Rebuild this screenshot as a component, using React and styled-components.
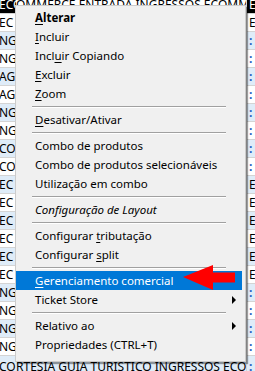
import React from 'react';
import styled, { createGlobalStyle } from 'styled-components';

const GlobalStyle = createGlobalStyle`
  html, body {
    margin: 0;
    padding: 0;
    background: #ffffff;
    overflow: hidden;
  }
  body {
    font-family: 'Segoe UI', 'Noto Sans', 'Open Sans', sans-serif;
  }
`;

const Screen = styled('div')`
  position: relative;
  width: 255px;
  height: 371px;
  overflow: hidden;
  background: #ffffff;
`;

const Grid = styled('div')`
  display: flex;
  flex-direction: column;
  margin-top: -4px;
  font-size: 12px;
  color: #000000;
`;

// the last row sits lower: its text only shows below the menu shadow
const Row = styled('div')`
  display: flex;
  height: 18px;
  box-sizing: border-box;
  border-bottom: 1px solid #d4d4d4;
  line-height: ${(props) => (props.$low ? '22px' : '17px')};
  background: ${(props) => (props.$alt ? '#dfecf8' : '#ffffff')};
`;

const CodeCell = styled('div')`
  width: 16px;
  flex-shrink: 0;
  overflow: hidden;
  white-space: nowrap;
  text-indent: -1px;
  background: ${(props) => (props.$focus ? '#000000' : 'transparent')};
  color: ${(props) => (props.$focus ? '#ffffff' : '#000000')};
`;

const DescCell = styled('div')`
  width: 230px;
  flex-shrink: 0;
  overflow: hidden;
  white-space: nowrap;
  border-right: 1px solid #d4d4d4;
`;

const FlagCell = styled('div')`
  flex: 1;
  overflow: hidden;
  white-space: nowrap;
  padding-left: 2px;
  background: ${(props) => (props.$focus ? '#000000' : 'transparent')};
  color: ${(props) => (props.$focus ? '#ffffff' : props.$dot ? '#1f5fc4' : '#000000')};
  font-weight: ${(props) => (props.$dot ? 'bold' : 'normal')};
`;

const Menu = styled('div')`
  position: absolute;
  left: 15px;
  top: 5px;
  width: 231px;
  box-sizing: border-box;
  padding: 2px 0 7px;
  background: #f0f0f0;
  border: 1px solid #cccccc;
  box-shadow: 2px 2px 1px rgba(0, 0, 0, 0.38);
  font-size: 11.5px;
  color: #000000;
`;

const Item = styled('div')`
  position: relative;
  display: flex;
  align-items: center;
  height: 19px;
  margin-right: 3px;
  padding-left: 19px;
  white-space: nowrap;
  background: ${(props) => (props.$active ? '#0078d7' : 'transparent')};
  color: ${(props) => (props.$active ? '#ffffff' : '#000000')};
  font-weight: ${(props) => (props.$bold ? 'bold' : 'normal')};
  font-style: ${(props) => (props.$italic ? 'italic' : 'normal')};

  u {
    text-decoration-thickness: 1px;
    text-underline-offset: 2px;
  }
`;

const Label = styled('span')`
  white-space: pre;
`;

const SubArrow = styled('span')`
  margin-left: auto;
  margin-right: 6px;
  width: 0;
  height: 0;
  border-left: 4px solid #000000;
  border-top: 4px solid transparent;
  border-bottom: 4px solid transparent;
`;

const Separator = styled('div')`
  height: 7px;
  display: flex;
  align-items: center;

  &::after {
    content: '';
    flex: 1;
    margin: 0 19px 0 16px;
    border-top: 1px solid #a0a0a0;
    border-bottom: 1px solid #ffffff;
  }
`;

const Pointer = styled('svg')`
  position: absolute;
  left: 182px;
  top: 264px;
`;

const rows = [
  { code: 'ECOMMERCE', desc: 'OMMERCE ENTRADA INGRESSOS ECOMMERCE', flag: 'E', focus: true },
  { code: 'EC', flag: 'EI' },
  { code: 'NG', flag: ':' },
  { code: 'NG', flag: ':' },
  { code: 'AGI', flag: ':' },
  { code: 'AGI', flag: ':' },
  { code: 'NG', flag: ':' },
  { code: 'NG', flag: ':' },
  { code: 'CO', flag: ':' },
  { code: 'CO', flag: ':' },
  { code: 'EC', flag: 'EI' },
  { code: 'EC', flag: 'EI' },
  { code: 'EC', flag: 'EI' },
  { code: 'EC', flag: 'EI' },
  { code: 'EC', flag: 'EI' },
  { code: 'EC', flag: 'EI' },
  { code: 'NG', flag: ':' },
  { code: 'NG', flag: ':' },
  { code: 'NG', flag: ':' },
  { code: 'NG', flag: ':' },
  { code: 'CO', desc: 'RTESIA GUIA TURISTICO INGRESSOS ECOMMERCE', flag: ':', low: true },
];

const menu = [
  { label: <><u>A</u>lterar</>, bold: true },
  { label: <><u>I</u>ncluir</> },
  { label: <>Incl<u>u</u>ir Copiando</> },
  { label: <><u>E</u>xcluir</> },
  { label: <><u>Z</u>oom</> },
  { sep: true },
  { label: <><u>D</u>esativar/Ativar</> },
  { sep: true },
  { label: 'Combo de produtos' },
  { label: 'Combo de produtos selecionáveis' },
  { label: 'Utilização em combo' },
  { sep: true },
  { label: 'Configuração de Layout', italic: true },
  { sep: true },
  { label: <>Configurar <u>t</u>ributação</> },
  { label: <>Configurar <u>s</u>plit</> },
  { sep: true },
  { label: <><u>G</u>erenciamento comercial</>, active: true },
  { label: 'Ticket Store', sub: true },
  { sep: true },
  { label: 'Relativo ao', sub: true },
  { label: 'Propriedades (CTRL+T)' },
];

const App = () => {
  return (
    <Screen>
      <GlobalStyle />
      <Grid>
        {rows.map((row, i) => (
          <Row key={i} $alt={i % 2 === 0 && !row.focus} $low={row.low}>
            <CodeCell $focus={row.focus}>{row.code}</CodeCell>
            <DescCell>{row.desc}</DescCell>
            <FlagCell $focus={row.focus} $dot={row.flag === ':'}>
              {row.flag}
            </FlagCell>
          </Row>
        ))}
      </Grid>

      <Menu>
        {menu.map((entry, i) =>
          entry.sep ? (
            <Separator key={i} />
          ) : (
            <Item
              key={i}
              $active={entry.active}
              $bold={entry.bold}
              $italic={entry.italic}
            >
              <Label>{entry.label}</Label>
              {entry.sub && <SubArrow />}
            </Item>
          )
        )}
      </Menu>

      <Pointer width="56" height="28" viewBox="0 0 56 28">
        <path d="M1 13 L31 1 L31 8.5 L53 8.5 L53 18.5 L31 18.5 L31 26 Z" fill="#ff0000" />
      </Pointer>
    </Screen>
  );
};

export default App;
